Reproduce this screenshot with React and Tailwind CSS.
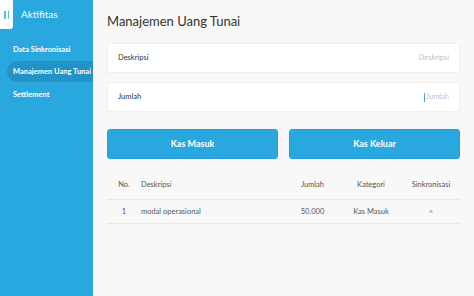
export default function App() {
  return (
    <div className="flex h-[296px] w-[474px] overflow-hidden font-['Lato',sans-serif]">
      <aside className="flex w-[93px] shrink-0 flex-col bg-[#29a8e0]">
        <div className="flex h-[29px] items-center">
          <div className="flex h-[29px] w-[13px] items-center justify-center rounded-br-[3px] bg-white">
            <div className="flex gap-[2px]">
              <span className="block h-[8px] w-[1.5px] bg-[#5fb8e3]" />
              <span className="block h-[8px] w-[1.5px] bg-[#5fb8e3]" />
            </div>
          </div>
          <span className="ml-[8px] text-[10px] text-white">Aktifitas</span>
        </div>
        <nav className="mt-[10px] flex flex-col gap-[1px] text-[7.5px] font-bold text-white">
          <div className="flex h-[21px] items-center pl-[13px]">Data Sinkronisasi</div>
          <div className="ml-[7px] flex h-[21px] items-center rounded-l-full bg-[#2393c7] pl-[6px] whitespace-nowrap">
            Manajemen Uang Tunai
          </div>
          <div className="flex h-[24px] items-center pl-[13px]">Settlement</div>
        </nav>
      </aside>
      <main className="flex-1 bg-[#f8f8f8] px-[14px] pt-[12px]">
        <h1 className="text-[13px] leading-[18px] text-[#333]">Manajemen Uang Tunai</h1>
        <div className="mt-[13px] flex h-[30px] items-center justify-between rounded-[2px] border border-[#efefef] bg-white px-[10px]">
          <span className="text-[7.5px] text-[#333]">Deskripsi</span>
          <span className="text-[7.5px] text-[#c2c2c2]">Deskripsi</span>
        </div>
        <div className="mt-[9px] flex h-[30px] items-center justify-between rounded-[2px] border border-[#efefef] bg-white px-[10px]">
          <span className="text-[7.5px] text-[#333]">Jumlah</span>
          <span className="flex items-center text-[7.5px] text-[#c2c2c2]">
            <span className="mr-[1px] block h-[9px] w-[1px] bg-[#3aa5e0]" />
            Jumlah
          </span>
        </div>
        <div className="mt-[17px] grid grid-cols-2 gap-[11px]">
          <button className="h-[30px] rounded-[3px] border border-[#2a9fd3] bg-[#29a8e0] text-[9px] font-bold text-white">
            Kas Masuk
          </button>
          <button className="h-[30px] rounded-[3px] border border-[#2a9fd3] bg-[#29a8e0] text-[9px] font-bold text-white">
            Kas Keluar
          </button>
        </div>
        <div className="mt-[12px] text-[7.5px] text-[#555]">
          <div className="grid h-[29px] grid-cols-[34px_149px_45px_72px_48px_1fr] items-center border-b border-[#e8e8e8]">
            <span className="text-center">No.</span>
            <span>Deskripsi</span>
            <span className="text-center">Jumlah</span>
            <span className="text-center">Kategori</span>
            <span className="text-center">Sinkronisasi</span>
            <span />
          </div>
          <div className="grid h-[24px] grid-cols-[34px_149px_45px_72px_48px_1fr] items-center border-b border-[#e8e8e8]">
            <span className="text-center">1</span>
            <span>modal operasional</span>
            <span className="text-center">50.000</span>
            <span className="text-center">Kas Masuk</span>
            <span className="text-center text-[#888]">×</span>
            <span />
          </div>
        </div>
      </main>
    </div>
  );
}
